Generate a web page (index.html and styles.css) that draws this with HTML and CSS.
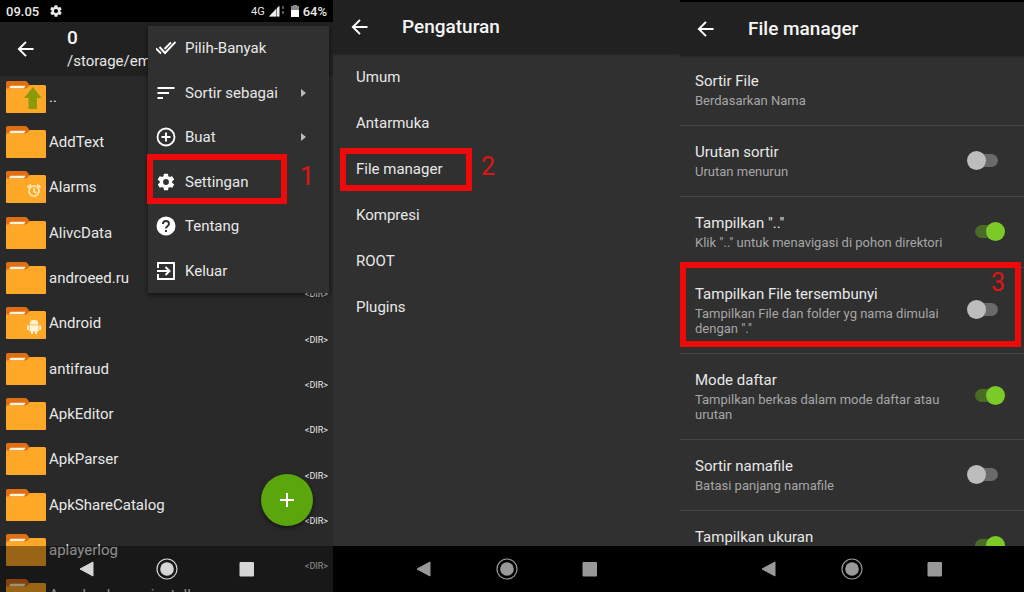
FILE: index.html
```html
<!DOCTYPE html>
<html lang="id">
<head>
<meta charset="utf-8">
<title>Pengaturan File manager</title>
<link rel="stylesheet" href="styles.css">
</head>
<body>
<svg class="defs" aria-hidden="true">
  <symbol id="back" viewBox="0 0 24 24"><path d="M21 12H4M12 3.500L3.500 12L12 20.500" fill="none" stroke="currentColor" stroke-width="2.400"/></symbol>
  <symbol id="folder" viewBox="0 0 40 34"><path d="M0 2.500Q0 1 1.500 1H19Q21 1 22 3L24 6H38V32H0Z" fill="#e06f14"/><path d="M0 8.500H19Q20.500 8.500 21.500 7.500L24 5H38.500Q40 5 40 6.500V32Q40 33 39 33H1Q0 33 0 32Z" fill="#ffa726"/><path d="M4.500 5.700H19.500L18 8.200H3Z" fill="#fff3d8"/></symbol>
  <symbol id="gear" viewBox="0 0 24 24"><path fill="currentColor" fill-rule="evenodd" d="M19.400 13a7.500 7.500 0 0 0 0-2l2.100-1.600a.5.5 0 0 0 .1-.6l-2-3.500a.5.5 0 0 0-.6-.2l-2.500 1a7.500 7.500 0 0 0-1.700-1l-.4-2.700a.5.5 0 0 0-.5-.4h-4a.5.5 0 0 0-.5.4L9 5.100a7.500 7.500 0 0 0-1.700 1l-2.500-1a.5.5 0 0 0-.6.2l-2 3.500a.5.5 0 0 0 .1.600L4.500 11a7.500 7.500 0 0 0 0 2l-2.100 1.600a.5.5 0 0 0-.1.600l2 3.500c.1.200.4.300.6.200l2.500-1a7.500 7.500 0 0 0 1.700 1l.4 2.700c0 .2.200.4.500.4h4c.3 0 .5-.2.500-.4l.4-2.700a7.500 7.500 0 0 0 1.700-1l2.500 1c.2.100.5 0 .6-.2l2-3.500a.5.5 0 0 0-.1-.6ZM12 15.500a3.500 3.500 0 1 1 0-7a3.500 3.500 0 0 1 0 7Z"/></symbol>
  <symbol id="nav-back" viewBox="0 0 22 22"><path d="M4 11L17 4V18Z" fill="currentColor" stroke="currentColor" stroke-linejoin="round"/></symbol>
  <symbol id="nav-home" viewBox="0 0 22 22"><circle cx="11" cy="11" r="10" fill="none" stroke="currentColor" stroke-width="1.200"/><circle cx="11" cy="11" r="6.800" fill="currentColor"/></symbol>
  <symbol id="nav-recent" viewBox="0 0 22 22"><rect x="3.500" y="4" width="14.500" height="14.500" rx="1" fill="currentColor"/></symbol>
</svg>
<main class="screens">

<section class="screen explorer">
  <div class="status">
    <span class="status-group"><span>09.05</span><svg class="status-gear"><use href="#gear"/></svg></span>
    <span class="status-group right"><small>4G</small>
      <svg class="signal" viewBox="0 0 18 12"><path d="M0 11.500L10 1V11.500Z" fill="#777"/><path d="M0 11.500L7 4V11.500ZM8 3L10.500 1V11.500H8Z" fill="#eee"/><path d="M14 1V4M14 6V9" stroke="#555" stroke-width="2"/></svg>
      <svg class="battery" viewBox="0 0 8 12"><path d="M0 1.500H2.500V0H5.500V1.500H8V12H0Z" fill="#fff"/><path d="M0 1.500H2.500V0H5.500V1.500H8V5H0Z" fill="#888"/></svg>
      <span>64%</span></span>
  </div>
  <header class="bar">
    <button class="back" aria-label="Kembali"><svg><use href="#back"/></svg></button>
    <div class="path"><h1>0</h1><span>/storage/emulated/0</span></div>
  </header>
  <ul class="files">
    <li><svg class="folder" viewBox="0 0 40 34"><use href="#folder"/><path d="M27 7L35.500 18H31V29H22.500V18H18Z" fill="#8a9a0a"/></svg><span>..</span></li>
    <li><svg class="folder"><use href="#folder"/></svg><span>AddText</span><small>&lt;DIR&gt;</small></li>
    <li><svg class="folder" viewBox="0 0 40 34"><use href="#folder"/><g fill="none" stroke="#ffe9b8" stroke-width="1.700"><circle cx="28" cy="21" r="5"/><path d="M28 18V21.500L30.500 23M21.500 17.500L25 14.500M31 14.500L34.500 17.500"/></g></svg><span>Alarms</span><small>&lt;DIR&gt;</small></li>
    <li><svg class="folder"><use href="#folder"/></svg><span>AlivcData</span><small>&lt;DIR&gt;</small></li>
    <li><svg class="folder"><use href="#folder"/></svg><span>androeed.ru</span><small>&lt;DIR&gt;</small></li>
    <li><svg class="folder" viewBox="0 0 40 34"><use href="#folder"/><g fill="#fff3d8"><path d="M23.500 18.500A4 4 0 0 1 32.500 18.500ZM23.500 19.200H32.500V25.500H31V28H29V25.500H27V28H25V25.500H23.500ZM21 19.500H22.800V24H21ZM33.200 19.500H35V24H33.200Z"/><path d="M24.500 13.500L26 16M31.500 13.500L30 16" stroke="#fff3d8" stroke-width=".8"/></g></svg><span>Android</span><small>&lt;DIR&gt;</small></li>
    <li><svg class="folder"><use href="#folder"/></svg><span>antifraud</span><small>&lt;DIR&gt;</small></li>
    <li><svg class="folder"><use href="#folder"/></svg><span>ApkEditor</span><small>&lt;DIR&gt;</small></li>
    <li><svg class="folder"><use href="#folder"/></svg><span>ApkParser</span><small>&lt;DIR&gt;</small></li>
    <li><svg class="folder"><use href="#folder"/></svg><span>ApkShareCatalog</span><small>&lt;DIR&gt;</small></li>
    <li><svg class="folder"><use href="#folder"/></svg><span>aplayerlog</span><small>&lt;DIR&gt;</small></li>
    <li><svg class="folder"><use href="#folder"/></svg><span>App_backup_reinstall</span></li>
  </ul>
  <button class="fab" aria-label="Tambah"><svg viewBox="0 0 14 14"><path d="M7 0V14M0 7H14" stroke="#fff" stroke-width="2"/></svg></button>
  <div class="menu">
    <button><svg viewBox="0 0 20 20"><path d="M0 10.500L5 15.500M3.500 9L9 15L19.500 4M8.500 11L15 4.500" fill="none" stroke="currentColor" stroke-width="1.900"/></svg><span>Pilih-Banyak</span></button>
    <button><svg viewBox="0 0 20 20"><path d="M1.500 5H18.500M1.500 10H13M1.500 15H7" stroke="currentColor" stroke-width="2"/></svg><span>Sortir sebagai</span><i class="more"></i></button>
    <button><svg viewBox="0 0 20 20"><circle cx="10" cy="10" r="8.500" fill="none" stroke="currentColor" stroke-width="1.800"/><path d="M10 5.500V14.500M5.500 10H14.500" stroke="currentColor" stroke-width="1.900"/></svg><span>Buat</span><i class="more"></i></button>
    <button><svg><use href="#gear"/></svg><span>Settingan</span><b class="mark mark-one"><em>1</em></b></button>
    <button><svg viewBox="0 0 20 20"><circle cx="10" cy="10" r="9.500" fill="currentColor"/><path d="M7 8Q7 5 10 5T13 8C13 10 10 10 10 12.500M10 14V16" fill="none" stroke="#303030" stroke-width="1.900"/></svg><span>Tentang</span></button>
    <button><svg viewBox="0 0 20 20"><path d="M2 7V2H18V18H2V13M1 10H13M9.500 6L13.500 10L9.500 14" fill="none" stroke="currentColor" stroke-width="1.900"/></svg><span>Keluar</span></button>
  </div>
  <nav class="nav">
    <button aria-label="Kembali"><svg><use href="#nav-back"/></svg></button>
    <button aria-label="Beranda"><svg><use href="#nav-home"/></svg></button>
    <button aria-label="Terbaru"><svg><use href="#nav-recent"/></svg></button>
  </nav>
</section>

<section class="screen settings">
  <header class="bar">
    <button class="back" aria-label="Kembali"><svg><use href="#back"/></svg></button>
    <h1>Pengaturan</h1>
  </header>
  <div class="sections">
    <button>Umum</button>
    <button>Antarmuka</button>
    <button>File manager<b class="mark mark-two"><em>2</em></b></button>
    <button>Kompresi</button>
    <button>ROOT</button>
    <button>Plugins</button>
  </div>
  <nav class="nav">
    <button aria-label="Kembali"><svg><use href="#nav-back"/></svg></button>
    <button aria-label="Beranda"><svg><use href="#nav-home"/></svg></button>
    <button aria-label="Terbaru"><svg><use href="#nav-recent"/></svg></button>
  </nav>
</section>

<section class="screen manager">
  <header class="bar">
    <button class="back" aria-label="Kembali"><svg><use href="#back"/></svg></button>
    <h1>File manager</h1>
  </header>
  <div class="options">
    <div class="option"><div class="label"><span>Sortir File</span><small>Berdasarkan Nama</small></div></div>
    <label class="option"><span class="label"><span>Urutan sortir</span><small>Urutan menurun</small></span><input type="checkbox"></label>
    <label class="option"><span class="label"><span>Tampilkan ".."</span><small>Klik ".." untuk menavigasi di pohon direktori</small></span><input type="checkbox" checked></label>
    <label class="option"><span class="label"><span>Tampilkan File tersembunyi</span><small>Tampilkan File dan folder yg nama dimulai dengan "."</small></span><input type="checkbox"><b class="mark mark-three"><em>3</em></b></label>
    <label class="option"><span class="label"><span>Mode daftar</span><small>Tampilkan berkas dalam mode daftar atau urutan</small></span><input type="checkbox" checked></label>
    <label class="option"><span class="label"><span>Sortir namafile</span><small>Batasi panjang namafile</small></span><input type="checkbox"></label>
    <label class="option"><span class="label"><span>Tampilkan ukuran</span><small>Tampilkan ukuran folder</small></span><input type="checkbox" checked></label>
  </div>
  <nav class="nav">
    <button aria-label="Kembali"><svg><use href="#nav-back"/></svg></button>
    <button aria-label="Beranda"><svg><use href="#nav-home"/></svg></button>
    <button aria-label="Terbaru"><svg><use href="#nav-recent"/></svg></button>
  </nav>
</section>
</main>
</body>
</html>
```
FILE: styles.css
```css
* { box-sizing: border-box; }

body {
  margin: 0;
  background: #000;
  color: #e8e8e8;
  font-family: Roboto, "Noto Sans", sans-serif;
  font-size: 15px;
}

.defs { position: absolute; width: 0; height: 0; }
svg { display: block; flex: none; }
small { font-size: 13px; }
h1 { margin: 0; font-size: 19px; font-weight: 500; line-height: 24px; color: #f5f5f5; }

button {
  padding: 0;
  border: 0;
  background: none;
  color: inherit;
  font: inherit;
  text-align: left;
}

.screens {
  display: grid;
  grid-template-columns: 333fr 347fr 344fr;
  height: 100vh;
}

.screen {
  position: relative;
  display: flex;
  flex-direction: column;
  min-width: 0;
  min-height: 0;
  overflow: hidden;
  background: #303030;
}

.bar {
  display: flex;
  flex: none;
  align-items: center;
  height: 52px;
  gap: 30px;
  padding-left: 16px;
  background: #212121;
  box-shadow: 0 1px 2px #1a1a1a;
}
.back svg { width: 20px; height: 20px; color: #fff; }
.settings .bar, .manager .bar { gap: 32px; padding-left: 17px; }
.settings .bar { height: 53px; }
.manager .bar { height: 55px; padding-left: 16px; border-top: 2px solid #000; }

/* File list */
.explorer { background: #292929; }
.status {
  display: flex;
  flex: none;
  justify-content: space-between;
  height: 22px;
  padding: 0 6px;
  background: #000;
  font-size: 13px;
  font-weight: 500;
}
.status-group { display: flex; align-items: center; gap: 10px; }
.status-group.right { gap: 4px; }
.status small { font-size: 11px; font-weight: 400; }
.status-gear { width: 14px; height: 14px; }
.signal { width: 18px; height: 12px; }
.battery { width: 8px; height: 12px; }
.explorer .bar { gap: 31px; padding-top: 2px; }
.path h1 { line-height: 24px; }
.path span { display: block; line-height: 22px; }

.files {
  flex: 1;
  min-height: 0;
  margin: 0;
  padding: 0 5px 0 6px;
  overflow: hidden;
  list-style: none;
}
.files li { display: flex; align-items: center; gap: 3px; height: 45px; }
.files li:nth-child(3n) { height: 46px; }
.folder { width: 40px; height: 34px; }
.files small { align-self: flex-end; margin-left: auto; font-size: 9px; line-height: 11px; }

.fab {
  position: absolute;
  right: 20px;
  bottom: 66px;
  display: grid;
  place-items: center;
  width: 52px;
  height: 52px;
  border-radius: 50%;
  background: #5ba60d;
  box-shadow: 0 2px 4px #0008;
}
.fab svg { width: 14px; height: 14px; }

.menu {
  position: absolute;
  top: 26px;
  right: 4px;
  display: grid;
  grid-template-rows: repeat(6, 1fr);
  width: 181px;
  height: 267px;
  background: #303030;
  box-shadow: 0 2px 5px #0008;
}
.menu button { position: relative; display: flex; align-items: center; gap: 9px; padding: 0 23px 0 8px; }
.menu svg { width: 20px; height: 20px; color: #fff; }
.more { margin-left: auto; border: solid transparent; border-width: 4px 0 4px 5px; border-left-color: #bbb; }

/* Numbered step outlines */
.mark { position: absolute; border: 6px solid #ee0a0a; pointer-events: none; }
.mark em {
  position: absolute;
  color: #e01414;
  font-size: 25px;
  font-style: normal;
  font-weight: 400;
  line-height: 26px;
}
.mark-one { top: -6px; bottom: 0; left: -1px; width: 140px; }
.mark-one em { left: 147px; top: 4px; }
.mark-two { top: 2px; bottom: 1px; left: 7px; width: 132px; }
.mark-two em { left: 135px; top: 0; }
.mark-three { top: -6px; bottom: 6px; left: 0; right: 3px; }
.mark-three em { right: 10px; top: 2px; }

/* Settings sections */
.sections { display: flex; flex: 1; flex-direction: column; min-height: 0; padding-top: 1px; }
.sections button { position: relative; height: 46px; padding-left: 23px; }

/* File manager options */
.options { flex: 1; min-height: 0; overflow: hidden; }
.option {
  position: relative;
  display: flex;
  align-items: center;
  justify-content: space-between;
  padding: 15px 21px 17px 15px;
  border-bottom: 1px solid #444;
}
.label { width: 258px; }
.label span { display: block; line-height: 23px; }
.label small { display: block; color: #a6a6a6; line-height: 15px; }
input {
  position: relative;
  flex: none;
  width: 28px;
  height: 13px;
  margin: 0 5px 0 0;
  appearance: none;
  border-radius: 7px;
  background: #6a6a6a;
}
input::before {
  content: "";
  position: absolute;
  top: -3px;
  left: -3px;
  width: 19px;
  height: 19px;
  border-radius: 50%;
  background: #bdbdbd;
}
input:checked { margin: 0; background: #4a6b26; }
input:checked::before { left: 11px; background: #7cca28; }

/* Navigation bar */
.nav {
  display: flex;
  flex: none;
  align-items: center;
  justify-content: center;
  gap: 61px;
  height: 46px;
  background: #000;
  color: #999;
}
.nav svg { width: 22px; height: 22px; }
.explorer .nav {
  position: absolute;
  right: 0;
  bottom: 0;
  left: 0;
  gap: 58px;
  background: #0006;
  color: #d6d6d6;
}
```
